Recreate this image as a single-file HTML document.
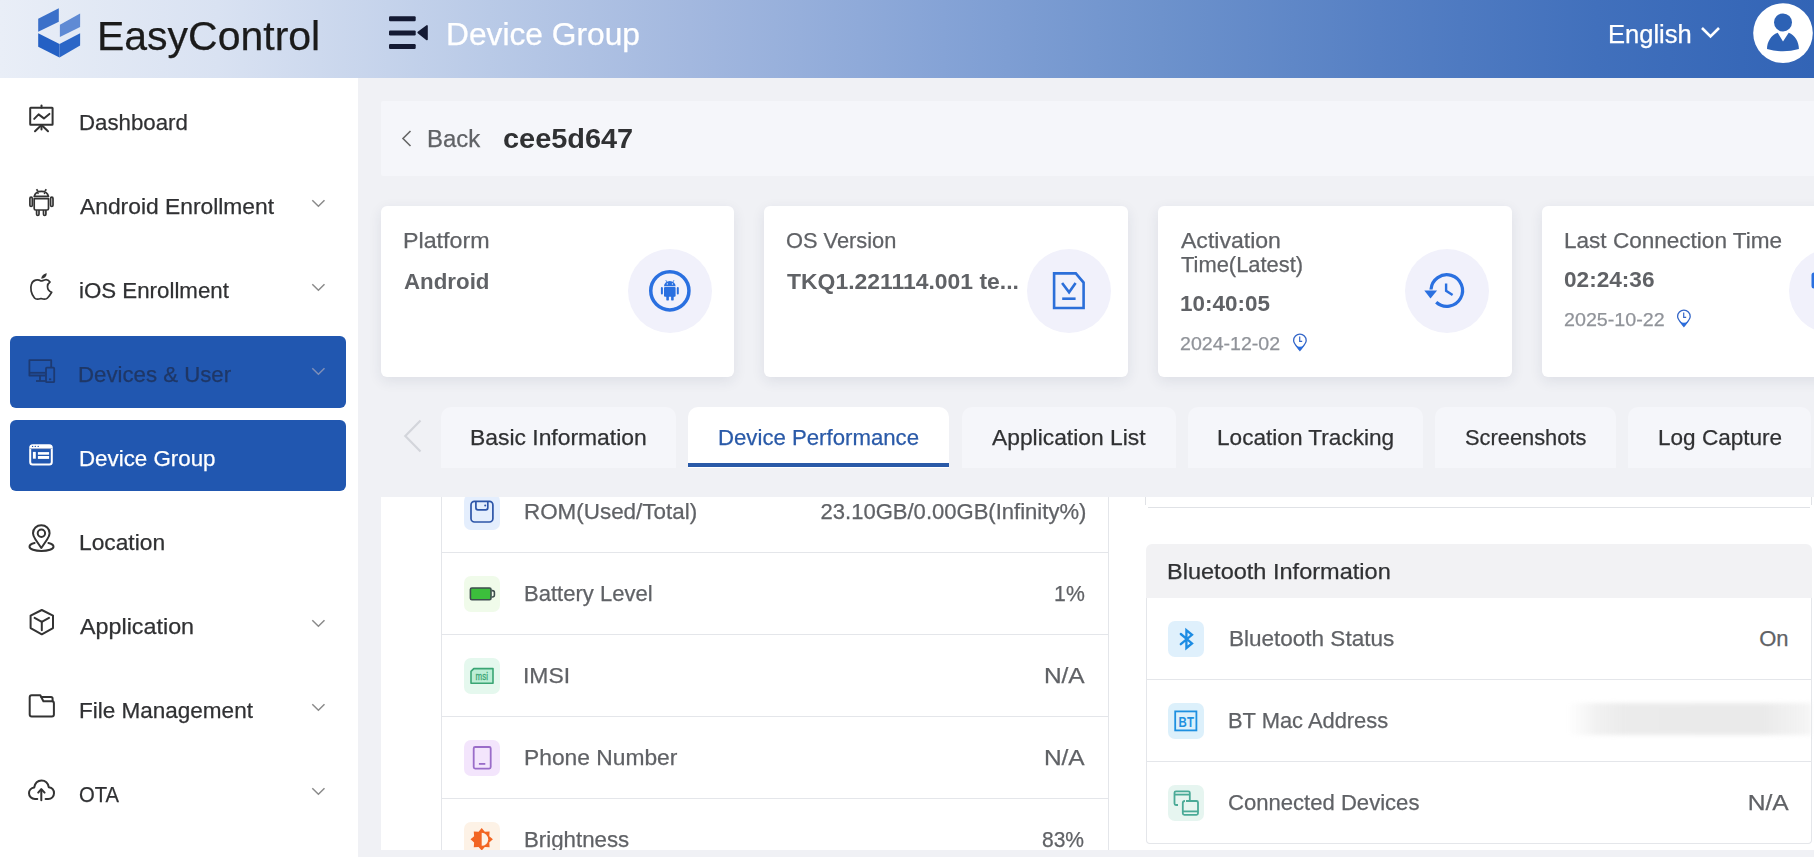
<!DOCTYPE html><html><head><meta charset="utf-8"><style>
*{margin:0;padding:0;box-sizing:border-box}
html,body{width:1814px;height:857px;overflow:hidden;background:#f0f1f5;font-family:"Liberation Sans",sans-serif;position:relative}
.tx{position:absolute;white-space:nowrap;line-height:1;-webkit-text-stroke:0.25px currentColor}
.b{position:absolute}
svg{position:absolute;left:0;top:0;overflow:visible}
</style></head><body><div class="b" style="left:0;top:0;width:1814px;height:78px;background:linear-gradient(90deg,#e9eef7 0%,#d9e2f2 12%,#b9cae7 27%,#a3b8df 38%,#85a3d6 52%,#6d92cc 64%,#5680c4 76%,#4170bc 88%,#3264b6 100%)"></div>
<div class="b" style="left:0;top:78px;width:358px;height:779px;background:#fff"></div>
<div class="b" style="left:10px;top:336px;width:336px;height:72px;background:#2157b0;border-radius:6px"></div>
<div class="b" style="left:10px;top:420px;width:336px;height:71px;background:#2157b0;border-radius:6px"></div>
<div class="b" style="left:381px;top:101px;width:1433px;height:75px;background:#f5f6fa;border-radius:2px 0 0 2px"></div>
<div class="b" style="left:381px;top:206px;width:353px;height:171px;background:#fff;border-radius:6px;box-shadow:0 4px 14px rgba(30,40,80,0.09)"></div>
<div class="b" style="left:764px;top:206px;width:364px;height:171px;background:#fff;border-radius:6px;box-shadow:0 4px 14px rgba(30,40,80,0.09)"></div>
<div class="b" style="left:1158px;top:206px;width:354px;height:171px;background:#fff;border-radius:6px;box-shadow:0 4px 14px rgba(30,40,80,0.09)"></div>
<div class="b" style="left:1542px;top:206px;width:300px;height:171px;background:#fff;border-radius:6px;box-shadow:0 4px 14px rgba(30,40,80,0.09)"></div>
<div class="b" style="left:628px;top:249px;width:84px;height:84px;border-radius:50%;background:#f1f1fb"></div>
<div class="b" style="left:1027px;top:249px;width:84px;height:84px;border-radius:50%;background:#f1f1fb"></div>
<div class="b" style="left:1405px;top:249px;width:84px;height:84px;border-radius:50%;background:#f1f1fb"></div>
<div class="b" style="left:1789px;top:249px;width:84px;height:84px;border-radius:50%;background:#f1f1fb"></div>
<div class="b" style="left:441px;top:407px;width:235px;height:61px;background:#f5f6fa;border-radius:10px 10px 0 0"></div>
<div class="b" style="left:688px;top:407px;width:261px;height:61px;background:#fff;border-radius:10px 10px 0 0"></div>
<div class="b" style="left:962px;top:407px;width:214px;height:61px;background:#f5f6fa;border-radius:10px 10px 0 0"></div>
<div class="b" style="left:1188px;top:407px;width:235px;height:61px;background:#f5f6fa;border-radius:10px 10px 0 0"></div>
<div class="b" style="left:1435px;top:407px;width:181px;height:61px;background:#f5f6fa;border-radius:10px 10px 0 0"></div>
<div class="b" style="left:1628px;top:407px;width:183px;height:61px;background:#f5f6fa;border-radius:10px 10px 0 0"></div>
<div class="b" style="left:688px;top:463px;width:261px;height:4px;background:#2a5aa8"></div>
<div class="b" style="left:381px;top:497px;width:1433px;height:353px;background:#fff"></div>
<div class="b" style="left:441px;top:497px;width:668px;height:353px;border-left:1px solid #e4e6ea;border-right:1px solid #e4e6ea"></div>
<div class="b" style="left:442px;top:552px;width:666px;height:1px;background:#e4e6ea"></div>
<div class="b" style="left:442px;top:634px;width:666px;height:1px;background:#e4e6ea"></div>
<div class="b" style="left:442px;top:716px;width:666px;height:1px;background:#e4e6ea"></div>
<div class="b" style="left:442px;top:798px;width:666px;height:1px;background:#e4e6ea"></div>
<div class="b" style="left:1145px;top:497px;width:1px;height:8px;background:#e0e2e6"></div>
<div class="b" style="left:1148px;top:507px;width:662px;height:1px;background:#e0e2e6"></div>
<div class="b" style="left:1811px;top:497px;width:1px;height:8px;background:#e0e2e6"></div>
<div class="b" style="left:1146px;top:544px;width:666px;height:54px;background:#f2f2f4;border-radius:6px 6px 0 0"></div>
<div class="b" style="left:1146px;top:598px;width:666px;height:246px;border-left:1px solid #e4e6ea;border-right:1px solid #e4e6ea;border-bottom:1px solid #e4e6ea;border-radius:0 0 4px 4px"></div>
<div class="b" style="left:1147px;top:679px;width:664px;height:1px;background:#e4e6ea"></div>
<div class="b" style="left:1147px;top:761px;width:664px;height:1px;background:#e4e6ea"></div>
<div class="b" style="left:1568px;top:703px;width:243px;height:32px;background:linear-gradient(90deg,rgba(232,232,232,0) 0%,rgba(232,232,232,0.6) 12%,#ebebeb 24%,#eaeaea 80%,rgba(236,236,236,0.5) 100%);filter:blur(2px)"></div>
<div class="b" style="left:464px;top:493.5px;width:36px;height:36px;border-radius:7px;background:#e4eefd"></div>
<div class="b" style="left:464px;top:576px;width:36px;height:36px;border-radius:7px;background:#f0fbea"></div>
<div class="b" style="left:464px;top:658px;width:36px;height:36px;border-radius:7px;background:#e5f8ee"></div>
<div class="b" style="left:464px;top:740px;width:36px;height:36px;border-radius:7px;background:#f3e5fc"></div>
<div class="b" style="left:464px;top:822px;width:36px;height:36px;border-radius:7px;background:#fdf2e6"></div>
<div class="b" style="left:1168px;top:621px;width:36px;height:36px;border-radius:7px;background:#dff0fc"></div>
<div class="b" style="left:1168px;top:703px;width:36px;height:36px;border-radius:7px;background:#dcf0fb"></div>
<div class="b" style="left:1168px;top:785px;width:36px;height:36px;border-radius:7px;background:#e6f5f0"></div>
<svg width="1814" height="857" viewBox="0 0 1814 857"><g transform="translate(38,8)">
<polygon points="0.2,10.7 20.8,0.2 20.8,13.7 0.2,23.8" fill="#3b70c9"/>
<polygon points="21.9,16.7 42.1,5.5 42.1,18.9 21.9,29" fill="#5f8ad4"/>
<polygon points="0.2,25.3 21.5,36.1 21.5,49.5 0.2,38.7" fill="#2460c4"/>
<polygon points="21.5,36.1 42.1,25.3 42.1,37.6 21.5,49.5" fill="#2b66c7"/></g><g fill="#141a33"><rect x="389" y="16.2" width="26.7" height="5" rx="1.2"/><rect x="389" y="30.4" width="26.7" height="5" rx="1.2"/><rect x="389" y="44" width="26.7" height="5" rx="1.2"/>
<polygon points="418.2,32.5 427,25.9 427,39.5" stroke="#141a33" stroke-width="1.6" stroke-linejoin="round"/></g><polyline points="1702,28 1710.5,36.5 1719,28" fill="none" stroke="#fff" stroke-width="2.6" stroke-linejoin="miter"/><circle cx="1783" cy="33.1" r="29.8" fill="#fff"/><circle cx="1783" cy="22.4" r="9" fill="#2d62b5"/><path d="M1777.7,32.7 L1783,41.6 L1788.7,32.7 C1795,35 1799,42 1798.9,49 Q1783,53.5 1767,49 C1767,42 1771,35 1777.7,32.7 Z" fill="#2d62b5"/><g fill="none" stroke="#333" stroke-width="2" stroke-linecap="round" stroke-linejoin="round"><rect x="30.2" y="107.8" width="22.4" height="17" rx="0.5"/><line x1="41.5" y1="105.5" x2="41.5" y2="107.8"/><polyline points="34.2,118.9 38.6,114.4 43.9,118.4 49.4,113.9"/><line x1="41.5" y1="125" x2="35" y2="131.3"/><line x1="41.5" y1="125" x2="48" y2="131.3"/><line x1="41.5" y1="125" x2="41.5" y2="129.5"/></g><g fill="none" stroke="#333" stroke-width="1.7" stroke-linejoin="round"><path d="M34.2,196.4 A7.3,6.4 0 0 1 48.5,196.4 Z"/><path d="M34.2,198.6 H48.5 V208.6 Q48.5,210 47,210 H35.7 Q34.2,210 34.2,208.6 Z"/><rect x="29.9" y="197.2" width="2.4" height="9.3" rx="1.2"/><rect x="50.6" y="197.2" width="2.4" height="9.3" rx="1.2"/><path d="M36.6,210 V214.2 Q36.6,215.5 37.8,215.5 Q39,215.5 39,214.2 V210"/><path d="M43.5,210 V214.2 Q43.5,215.5 44.7,215.5 Q45.9,215.5 45.9,214.2 V210"/><line x1="36.5" y1="189.2" x2="37.8" y2="191"/><line x1="46.3" y1="189.2" x2="45" y2="191"/></g><circle cx="38" cy="193.5" r="0.8" fill="#333"/><circle cx="44.5" cy="193.5" r="0.8" fill="#333"/><path d="M41,281 C38,279 33,279.5 31.5,284 C30,288 31,294 34.5,298 C36,299.8 38,299.5 41,298.5 C44,299.5 46,299.8 47.5,298 C49.5,296 51,293.5 51.7,292.3 C48.5,291 47.5,288.5 47.5,286.5 C47.5,284.5 48.5,283 50,282 C48.5,280 46,279.5 44.5,280 C43,280.5 42,281 41,281 Z" fill="none" stroke="#333" stroke-width="1.7" stroke-linejoin="round"/><path d="M41.3,278.8 C41.3,276 43.5,273.8 46.8,273.3 C46.6,276.5 44.5,278.6 41.3,278.8 Z" fill="#333"/><g fill="none" stroke="#1d3a72" stroke-width="1.8" stroke-linejoin="round"><path d="M45.5,375.5 H29.4 V360.2 H51.2 V367"/><line x1="29.4" y1="372.8" x2="45.5" y2="372.8"/><line x1="36" y1="381" x2="45.5" y2="381"/><line x1="40" y1="375.5" x2="40" y2="381"/><rect x="46" y="367.6" width="8.2" height="14.6" rx="0.8"/><line x1="49" y1="379.3" x2="51.2" y2="379.3"/></g><g><rect x="30.2" y="445.2" width="21.6" height="19.3" rx="2.5" fill="none" stroke="#fff" stroke-width="2"/><rect x="30" y="445" width="22" height="3.8" rx="1.5" fill="#fff"/><line x1="29.5" y1="448.6" x2="52.5" y2="448.6" stroke="#9aa8c8" stroke-width="0.8"/><circle cx="32.6" cy="446.4" r="0.7" fill="#2157b0"/><circle cx="35.3" cy="446.4" r="0.7" fill="#2157b0"/><circle cx="38.2" cy="446.4" r="0.7" fill="#2157b0"/><rect x="32.9" y="451.9" width="2.9" height="6.8" fill="#fff"/><rect x="37.9" y="452.1" width="11.2" height="2.6" fill="#fff"/><rect x="37.9" y="456" width="11.2" height="2.9" fill="#fff"/></g><g fill="none" stroke="#333" stroke-width="2" stroke-linecap="round" stroke-linejoin="round" stroke-width="1.8"><path d="M41.3,548 L35.5,539.5 C33.6,536.6 33,534.9 33,533.2 C33,528.5 36.7,525.3 41.3,525.3 C45.9,525.3 49.6,528.5 49.6,533.2 C49.6,534.9 49,536.6 47.1,539.5 Z"/><circle cx="41.4" cy="533.3" r="3.7"/><path d="M34.6,543 C31,543.8 29.5,545 29.5,546.7 C29.5,549.2 35,550.9 41.5,550.9 C48,550.9 53.5,549.2 53.5,546.7 C53.5,545 52,543.8 48.4,543"/></g><g fill="none" stroke="#333" stroke-width="2" stroke-linecap="round" stroke-linejoin="round"><polygon points="41.8,610 53,615.6 53,628.1 41.8,634.3 30.6,628.1 30.6,615.6"/><polyline points="34.6,617.9 41.8,621.8 49,617.9"/><line x1="41.8" y1="621.8" x2="41.8" y2="630.2"/></g><g fill="none" stroke="#333" stroke-width="2" stroke-linecap="round" stroke-linejoin="round"><path d="M29.7,697.2 Q29.7,695.2 31.7,695.2 H40.3 L43.4,701.3 H52.2 Q53.9,701.3 53.9,703.2 V714.6 Q53.9,716.6 51.9,716.6 H31.7 Q29.7,716.6 29.7,714.6 Z"/><path d="M41.3,697 H51 Q52.6,697 52.6,698.6 V701.3"/></g><g fill="none" stroke="#333" stroke-width="2" stroke-linecap="round" stroke-linejoin="round"><path d="M37.3,799 H35 C31.5,799 29,796.3 29,793.2 C29,790.2 31.2,787.8 34.2,787.5 C35,783.2 38,780.5 41.5,780.5 C45.2,780.5 48,783.2 48.8,787.3 C51.8,787.8 54,790.2 54,793.3 C54,796.5 51.5,799 48.3,799 H45.6"/><line x1="41.3" y1="789.5" x2="41.3" y2="800.3"/><polyline points="38.2,792.6 41.3,789.2 44.6,792.6"/></g><polyline points="312.3,200.3 318.4,206.3 324.5,200.3" fill="none" stroke="#8a8a8a" stroke-width="1.5"/><polyline points="312.3,284.3 318.4,290.3 324.5,284.3" fill="none" stroke="#8a8a8a" stroke-width="1.5"/><polyline points="312.3,368.3 318.4,374.3 324.5,368.3" fill="none" stroke="#7f8fb8" stroke-width="1.5"/><polyline points="312.3,620.3 318.4,626.3 324.5,620.3" fill="none" stroke="#8a8a8a" stroke-width="1.5"/><polyline points="312.3,704.3 318.4,710.3 324.5,704.3" fill="none" stroke="#8a8a8a" stroke-width="1.5"/><polyline points="312.3,788.3 318.4,794.3 324.5,788.3" fill="none" stroke="#8a8a8a" stroke-width="1.5"/><polyline points="410.5,131 403,138.5 410.5,146" fill="none" stroke="#666" stroke-width="1.6"/><polyline points="420.5,420.4 405.3,435.9 420.5,451.4" fill="none" stroke="#d3d5db" stroke-width="2.2"/><circle cx="669.85" cy="290.8" r="19.1" fill="none" stroke="#2a70e0" stroke-width="3.5"/><g fill="#2a70e0"><path d="M664,286.2 A5.8,5.3 0 0 1 675.6,286.2 Z"/><rect x="664" y="286.9" width="11.6" height="9.9" rx="1"/><rect x="660.9" y="286.9" width="2" height="7.6" rx="1"/><rect x="676.8" y="286.9" width="2" height="7.6" rx="1"/><rect x="666.3" y="295" width="2.6" height="5.6" rx="1.2"/><rect x="671.1" y="295" width="2.6" height="5.6" rx="1.2"/></g><g stroke="#2a70e0" stroke-width="0.7"><line x1="666.8" y1="282.2" x2="665.8" y2="280"/><line x1="673" y1="282.2" x2="674" y2="280"/></g><circle cx="667.3" cy="283.9" r="0.6" fill="#fff"/><circle cx="672.4" cy="283.9" r="0.6" fill="#fff"/><g fill="none" stroke="#2c6fd9" stroke-width="2.6" stroke-linejoin="miter"><path d="M1054.1,273.4 H1075.8 L1083.6,282.6 V308 H1054.1 Z"/><polyline points="1062.1,283 1069.1,292.2 1075.6,283"/><line x1="1062.2" y1="298.7" x2="1075.6" y2="298.7"/></g><g fill="none" stroke="#2a70e0" stroke-width="3.2"><path d="M1431,289.5 A15.8,15.8 0 1 1 1436.2,302.3"/><polyline points="1446.1,283.4 1446.1,290.8 1452.6,295" stroke-width="2.4"/></g><polygon points="1424.3,290.6 1437.1,290.6 1430.5,298.6" fill="#2a70e0"/><g><path d="M1293.6000000000001,340.4 A6.3,6.3 0 1 1 1306.2,340.4 C1306.2,343.4 1302.9,346.4 1299.9,350.4 C1296.9,346.4 1293.6000000000001,343.4 1293.6000000000001,340.4 Z" fill="none" stroke="#3466c8" stroke-width="1.3"/><path d="M1295.6000000000001,345.4 Q1299.9,348.0 1304.2,345.4 L1299.9,350.4 Z" fill="#2a6fe0"/><polyline points="1299.7,336.4 1299.7,341.4 1302.2,341.4" fill="none" stroke="#3466c8" stroke-width="1.2"/></g><g><path d="M1677.6000000000001,316.4 A6.3,6.3 0 1 1 1690.2,316.4 C1690.2,319.4 1686.9,322.4 1683.9,326.4 C1680.9,322.4 1677.6000000000001,319.4 1677.6000000000001,316.4 Z" fill="none" stroke="#3466c8" stroke-width="1.3"/><path d="M1679.6000000000001,321.4 Q1683.9,324.0 1688.2,321.4 L1683.9,326.4 Z" fill="#2a6fe0"/><polyline points="1683.7,312.4 1683.7,317.4 1686.2,317.4" fill="none" stroke="#3466c8" stroke-width="1.2"/></g><rect x="1811.5" y="272.5" width="10" height="16" rx="2.5" fill="#2a70e0"/><g fill="none" stroke="#2d55a8" stroke-width="1.7"><rect x="471" y="501.4" width="21.9" height="20.6" rx="3.5"/><path d="M475.9,501.4 V507.8 Q475.9,509.8 477.9,509.8 H485.8 Q487.8,509.8 487.8,507.8 V501.4"/></g><circle cx="485.2" cy="505.6" r="1" fill="#2d55a8"/><rect x="470.4" y="588" width="20.6" height="11.8" rx="1.5" fill="#3cbf3c" stroke="#3e4e4e" stroke-width="1.6"/><path d="M491.6,590.6 H492.4 Q494.4,590.6 494.4,592.6 V595 Q494.4,597 492.4,597 H491.6" fill="none" stroke="#3e4e4e" stroke-width="1.6"/><path d="M473.8,668.6 H493 V683.3 H471 V671.4 Z" fill="#bdeed6" stroke="#3aa574" stroke-width="1.6" stroke-linejoin="round"/><text x="0" y="0" font-family="Liberation Sans" font-size="11" fill="#3aa574" transform="translate(475.6,680.3) scale(0.72,0.95)" stroke="#3aa574" stroke-width="0.3">msi</text><g fill="none" stroke="#9a6dc9" stroke-width="1.8"><rect x="473.7" y="747" width="17" height="21.6" rx="1.5"/><line x1="478.9" y1="763.9" x2="485.3" y2="763.9"/></g><polygon points="481.70,828.10 484.84,831.72 489.62,831.38 489.28,836.16 492.90,839.30 489.28,842.44 489.62,847.22 484.84,846.88 481.70,850.50 478.56,846.88 473.78,847.22 474.12,842.44 470.50,839.30 474.12,836.16 473.78,831.38 478.56,831.72" fill="#f26522"/><path d="M481.7,832.8 A6.5,6.5 0 0 1 481.7,845.8 Z" fill="#fdf2e6"/><polyline points="1180.8,634 1192,643.4 1186.4,648 1186.4,630.2 1192,634.8 1180.8,644.2" fill="none" stroke="#1c8ce3" stroke-width="2.3" stroke-linejoin="miter" stroke-linecap="round"/><rect x="1175.2" y="711.4" width="21.2" height="19" fill="none" stroke="#1e90e0" stroke-width="1.8"/><text x="0" y="0" font-family="Liberation Sans" font-size="15.5" font-weight="bold" fill="#1e90e0" transform="translate(1178.6,726.8) scale(0.74,0.95)">BT</text><g fill="none" stroke="#4aaa97" stroke-width="1.8" stroke-linejoin="round"><path d="M1178,805 H1176 Q1174.5,805 1174.5,803.5 V792.8 Q1174.5,791.3 1176,791.3 H1188.3 Q1189.8,791.3 1189.8,792.8 V800.5"/><line x1="1174.5" y1="794.6" x2="1189.8" y2="794.6"/><path d="M1186,801 H1196.5 Q1198,801 1198,802.5 V813.3 Q1198,814.8 1196.5,814.8 H1184.3 Q1182.8,814.8 1182.8,813.3 V803 Q1182.8,801 1185,801"/><line x1="1182.8" y1="811.4" x2="1198" y2="811.4"/></g></svg>
<div class="tx" style="left:96.60px;top:15.63px;font-size:40px;color:#1b1b1b;transform:scaleX(1.0244);transform-origin:0 0;">EasyControl</div>
<div class="tx" style="left:445.80px;top:19.25px;font-size:31px;color:#ffffff;transform:scaleX(1.0234);transform-origin:0 0;">Device Group</div>
<div class="tx" style="left:1608.00px;top:21.73px;font-size:25px;color:#ffffff;transform:scaleX(1.0213);transform-origin:0 0;">English</div>
<div class="tx" style="left:79.00px;top:111.57px;font-size:22px;color:#303133;transform:scaleX(1.0117);transform-origin:0 0;">Dashboard</div>
<div class="tx" style="left:80.00px;top:195.97px;font-size:22px;color:#303133;transform:scaleX(1.0373);transform-origin:0 0;">Android Enrollment</div>
<div class="tx" style="left:79.00px;top:279.77px;font-size:22px;color:#303133;transform:scaleX(1.0131);transform-origin:0 0;">iOS Enrollment</div>
<div class="tx" style="left:78.00px;top:363.77px;font-size:22px;color:#1f3766;transform:scaleX(1.0097);transform-origin:0 0;">Devices &amp; User</div>
<div class="tx" style="left:79.00px;top:447.97px;font-size:22px;color:#ffffff;transform:scaleX(1.0149);transform-origin:0 0;">Device Group</div>
<div class="tx" style="left:79.00px;top:531.77px;font-size:22px;color:#303133;transform:scaleX(1.0347);transform-origin:0 0;">Location</div>
<div class="tx" style="left:80.00px;top:615.77px;font-size:22px;color:#303133;transform:scaleX(1.0598);transform-origin:0 0;">Application</div>
<div class="tx" style="left:79.00px;top:699.77px;font-size:22px;color:#303133;transform:scaleX(1.0232);transform-origin:0 0;">File Management</div>
<div class="tx" style="left:79.00px;top:783.77px;font-size:22px;color:#303133;transform:scaleX(0.9189);transform-origin:0 0;">OTA</div>
<div class="tx" style="left:427.20px;top:128.23px;font-size:23px;color:#606266;transform:scaleX(1.0387);transform-origin:0 0;">Back</div>
<div class="tx" style="left:502.80px;top:125.09px;font-size:28px;color:#303133;font-weight:bold;-webkit-text-stroke:0;transform:scaleX(1.0319);transform-origin:0 0;">cee5d647</div>
<div class="tx" style="left:402.80px;top:230.37px;font-size:22px;color:#606266;transform:scaleX(1.0565);transform-origin:0 0;">Platform</div>
<div class="tx" style="left:403.80px;top:270.57px;font-size:22px;color:#606266;font-weight:bold;-webkit-text-stroke:0;transform:scaleX(1.0136);transform-origin:0 0;">Android</div>
<div class="tx" style="left:786.00px;top:230.37px;font-size:22px;color:#606266;transform:scaleX(0.9921);transform-origin:0 0;">OS Version</div>
<div class="tx" style="left:787.00px;top:270.57px;font-size:22px;color:#606266;font-weight:bold;-webkit-text-stroke:0;transform:scaleX(1.0421);transform-origin:0 0;">TKQ1.221114.001 te...</div>
<div class="tx" style="left:1181.00px;top:230.37px;font-size:22px;color:#606266;transform:scaleX(1.0474);transform-origin:0 0;">Activation</div>
<div class="tx" style="left:1181.00px;top:254.27px;font-size:22px;color:#606266;transform:scaleX(0.9957);transform-origin:0 0;">Time(Latest)</div>
<div class="tx" style="left:1180.00px;top:292.87px;font-size:22px;color:#606266;font-weight:bold;-webkit-text-stroke:0;transform:scaleX(1.0207);transform-origin:0 0;">10:40:05</div>
<div class="tx" style="left:1180.00px;top:334.11px;font-size:19px;color:#909399;transform:scaleX(1.0303);transform-origin:0 0;">2024-12-02</div>
<div class="tx" style="left:1564.00px;top:230.37px;font-size:22px;color:#606266;transform:scaleX(1.0248);transform-origin:0 0;">Last Connection Time</div>
<div class="tx" style="left:1564.00px;top:268.97px;font-size:22px;color:#606266;font-weight:bold;-webkit-text-stroke:0;transform:scaleX(1.0277);transform-origin:0 0;">02:24:36</div>
<div class="tx" style="left:1564.00px;top:309.71px;font-size:19px;color:#909399;transform:scaleX(1.0365);transform-origin:0 0;">2025-10-22</div>
<div class="tx" style="left:469.60px;top:427.47px;font-size:22px;color:#303133;transform:scaleX(1.0398);transform-origin:0 0;">Basic Information</div>
<div class="tx" style="left:718.00px;top:427.47px;font-size:22px;color:#2a5aa8;transform:scaleX(1.0085);transform-origin:0 0;">Device Performance</div>
<div class="tx" style="left:991.60px;top:427.47px;font-size:22px;color:#303133;transform:scaleX(1.0374);transform-origin:0 0;">Application List</div>
<div class="tx" style="left:1216.80px;top:427.47px;font-size:22px;color:#303133;transform:scaleX(1.0275);transform-origin:0 0;">Location Tracking</div>
<div class="tx" style="left:1465.20px;top:427.47px;font-size:22px;color:#303133;transform:scaleX(0.9926);transform-origin:0 0;">Screenshots</div>
<div class="tx" style="left:1657.80px;top:427.47px;font-size:22px;color:#303133;transform:scaleX(1.0250);transform-origin:0 0;">Log Capture</div>
<div class="tx" style="left:524.00px;top:501.07px;font-size:22px;color:#606266;transform:scaleX(1.0187);transform-origin:0 0;">ROM(Used/Total)</div>
<div class="tx" style="right:727.58px;top:501.07px;font-size:22px;color:#606266;transform:scaleX(1.0019);transform-origin:100% 0;">23.10GB/0.00GB(Infinity%)</div>
<div class="tx" style="left:524.00px;top:582.77px;font-size:22px;color:#606266;transform:scaleX(1.0011);transform-origin:0 0;">Battery Level</div>
<div class="tx" style="right:729.70px;top:582.77px;font-size:22px;color:#606266;transform:scaleX(0.9649);transform-origin:100% 0;">1%</div>
<div class="tx" style="left:523.00px;top:664.77px;font-size:22px;color:#606266;transform:scaleX(1.0415);transform-origin:0 0;">IMSI</div>
<div class="tx" style="right:729.67px;top:664.77px;font-size:22px;color:#606266;transform:scaleX(1.1120);transform-origin:100% 0;">N/A</div>
<div class="tx" style="left:524.00px;top:746.77px;font-size:22px;color:#606266;transform:scaleX(1.0362);transform-origin:0 0;">Phone Number</div>
<div class="tx" style="right:729.67px;top:746.77px;font-size:22px;color:#606266;transform:scaleX(1.1120);transform-origin:100% 0;">N/A</div>
<div class="tx" style="left:524.00px;top:828.77px;font-size:22px;color:#606266;transform:scaleX(1.0114);transform-origin:0 0;">Brightness</div>
<div class="tx" style="right:729.57px;top:828.77px;font-size:22px;color:#606266;transform:scaleX(0.9562);transform-origin:100% 0;">83%</div>
<div class="tx" style="left:1167.20px;top:560.57px;font-size:22px;color:#303133;transform:scaleX(1.0698);transform-origin:0 0;">Bluetooth Information</div>
<div class="tx" style="left:1228.60px;top:627.77px;font-size:22px;color:#606266;transform:scaleX(1.0231);transform-origin:0 0;">Bluetooth Status</div>
<div class="tx" style="right:25.41px;top:627.77px;font-size:22px;color:#606266;transform:scaleX(1.0000);transform-origin:100% 0;">On</div>
<div class="tx" style="left:1227.80px;top:709.97px;font-size:22px;color:#606266;transform:scaleX(0.9949);transform-origin:0 0;">BT Mac Address</div>
<div class="tx" style="left:1227.80px;top:791.57px;font-size:22px;color:#606266;transform:scaleX(1.0035);transform-origin:0 0;">Connected Devices</div>
<div class="tx" style="right:25.47px;top:791.57px;font-size:22px;color:#606266;transform:scaleX(1.1177);transform-origin:100% 0;">N/A</div>
<div class="b" style="left:358px;top:850px;width:1456px;height:7px;background:#f0f1f5"></div>
<div class="b" style="left:381px;top:468px;width:1433px;height:29px;background:#f0f1f5"></div></body></html>
